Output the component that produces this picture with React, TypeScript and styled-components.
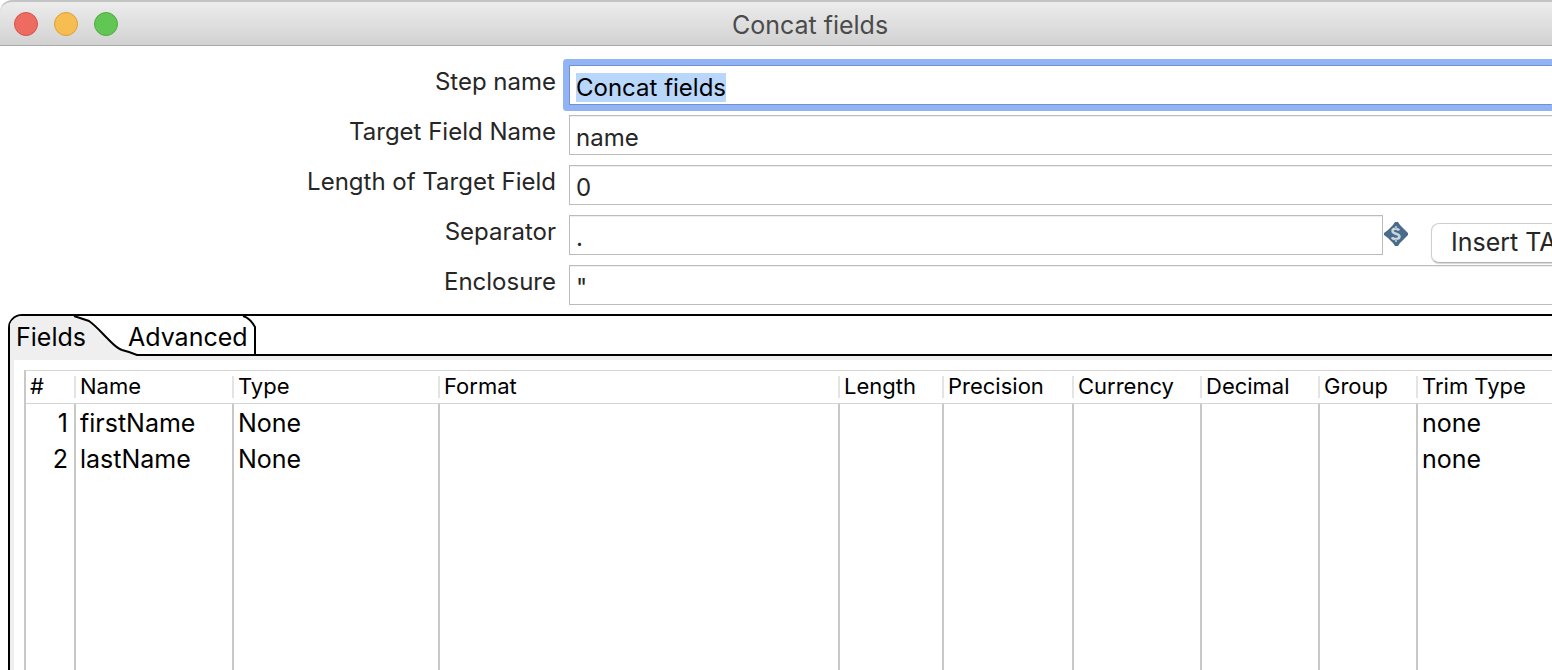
import React, { useEffect, useRef } from "react";
import styled, { createGlobalStyle } from "styled-components";

const GlobalStyle = createGlobalStyle`
  *, *::before, *::after { box-sizing: border-box; }
  body {
    margin: 0;
    background: #fff;
    color: #000;
    font-family: Inter, "Liberation Sans", sans-serif;
  }
  button, input { font: inherit; color: inherit; }
`;

const Window = styled.div`
  display: flex;
  flex-direction: column;
  min-height: 100vh;
  overflow: hidden;
`;

const TitleBar = styled.header`
  display: flex;
  align-items: center;
  height: 46px;
  padding-left: 14px;
  border-top: 2px solid #c4c4c4;
  border-bottom: 1px solid #a9a9a9;
  border-top-left-radius: 12px;
  background: linear-gradient(#ececec, #d2d2d2);
`;

const Lights = styled.div`
  display: flex;
  gap: 16px;
`;

const Light = styled.button<{ $fill: string; $edge: string }>`
  width: 24px;
  height: 24px;
  padding: 0;
  border: 1px solid ${(p) => p.$edge};
  border-radius: 50%;
  background: ${(p) => p.$fill};
`;

const Title = styled.h1`
  flex: 1;
  margin: 0;
  padding: 2px 50px 0 0;
  color: #4b4b4b;
  font-size: 25px;
  font-weight: 400;
  line-height: 32px;
  text-align: center;
`;

const Form = styled.form`
  display: flex;
  flex-direction: column;
  gap: 10px;
  padding: 19px 0 9px;
`;

const FormRow = styled.div`
  display: flex;
  align-items: flex-start;
  height: 40px;
`;

const Label = styled.label`
  flex: none;
  width: 569px;
  padding-right: 13px;
  color: #262626;
  font-size: 24px;
  line-height: 34px;
  text-align: right;
`;

const TextInput = styled.input<{ $closed?: boolean }>`
  flex: 1;
  min-width: 0;
  height: 40px;
  padding: 4px 6px 0;
  border: 1px solid #bcbcbc;
  border-right-width: ${(p) => (p.$closed ? "1px" : "0")};
  border-radius: 0;
  background: #fff;
  box-shadow: inset 0 1px #efefef;
  color: #262626;
  font-size: 24px;
  line-height: 32px;
  outline: none;

  &:focus {
    border-color: #7090d2;
    box-shadow: 0 0 0 6px #92b4f5;
    border-radius: 1px;
    color: #000;
  }
  &::selection {
    background: #b8d7fb;
    color: #000;
  }
`;

const VariableIcon = styled.svg`
  flex: none;
  width: 24px;
  height: 24px;
  margin: 7px 23px 0 1px;
`;

const PushButton = styled.button`
  flex: none;
  width: 160px;
  height: 40px;
  margin: 8px -39px 0 0;
  padding: 0 19px 2px;
  border: 1px solid #cfcfcf;
  border-bottom-color: #b4b4b4;
  border-radius: 8px;
  background: #fff;
  box-shadow: 0 1px 1px #d8d8d8;
  color: #262626;
  font-size: 25px;
  line-height: 32px;
  text-align: left;
  white-space: nowrap;
`;

const TabFolder = styled.section`
  display: flex;
  flex: 1;
  flex-direction: column;
  margin-left: 8px;
  border: solid #000;
  border-width: 2px 0 0 2px;
  border-top-left-radius: 14px;
`;

const TabStrip = styled.div`
  display: flex;
  height: 40px;
`;

const TabList = styled.div`
  position: relative;
  display: flex;
  flex: none;
  width: 246px;
`;

const TabShape = styled.svg`
  position: absolute;
  inset: 0;
`;

const Tab = styled.button<{ $width: number }>`
  position: relative;
  width: ${(p) => p.$width}px;
  padding: 2px 0 0 6px;
  border: 0;
  background: none;
  font-size: 25px;
  line-height: 32px;
  text-align: left;
  white-space: nowrap;
`;

const StripRest = styled.div`
  flex: 1;
  border-bottom: 2px solid #000;
`;

const Panel = styled.div`
  display: flex;
  flex: 1;
  border: solid #efefef;
  border-width: 4px 0 0 4px;
  padding: 10px 0 0 10px;
`;

const Grid = styled.table`
  flex: 1;
  table-layout: fixed;
  width: 100%;
  border-spacing: 0;
  border-top: 1px solid #d4d4d4;
  border-left: 2px solid #c8c8c8;
`;

const Column = styled.col<{ $width?: number }>`
  width: ${(p) => (p.$width ? `${p.$width}px` : "auto")};
`;

const HeadCell = styled.th`
  height: 33px;
  padding: 0;
  border-bottom: 1px solid #d4d4d4;
  font-size: 22px;
  font-weight: 400;
  line-height: 20px;
  text-align: left;
  white-space: nowrap;
`;

const HeadText = styled.div<{ $divided: boolean }>`
  padding: 0 0 2px 4px;
  border-left: ${(p) => (p.$divided ? "2px solid #e4e4e4" : "0")};
`;

const Cell = styled.td`
  height: 36px;
  padding: 2px 0 0 4px;
  border-left: 2px solid #c8c8c8;
  font-size: 25px;
  line-height: 32px;
  white-space: nowrap;

  &:first-child {
    padding: 2px 6px 0 0;
    border-left: 0;
    text-align: right;
  }
`;

const FillRow = styled.tr`
  height: 100%;
`;

const columns: { name: string; width?: number }[] = [
  { name: "#", width: 48 },
  { name: "Name", width: 158 },
  { name: "Type", width: 206 },
  { name: "Format", width: 400 },
  { name: "Length", width: 104 },
  { name: "Precision", width: 130 },
  { name: "Currency", width: 128 },
  { name: "Decimal", width: 118 },
  { name: "Group", width: 98 },
  { name: "Trim Type" },
];

const rows = [
  ["1", "firstName", "None", "", "", "", "", "", "", "none"],
  ["2", "lastName", "None", "", "", "", "", "", "", "none"],
];

export default function App() {
  const stepName = useRef<HTMLInputElement>(null);

  useEffect(() => {
    stepName.current?.focus();
    stepName.current?.select();
  }, []);

  return (
    <Window>
      <GlobalStyle />
      <TitleBar>
        <Lights>
          <Light aria-label="Close" $fill="#ed6b60" $edge="#d9534b" />
          <Light aria-label="Minimize" $fill="#f6be50" $edge="#dda03c" />
          <Light aria-label="Zoom" $fill="#62c655" $edge="#4fab42" />
        </Lights>
        <Title>Concat fields</Title>
      </TitleBar>

      <Form onSubmit={(e) => e.preventDefault()}>
        <FormRow>
          <Label htmlFor="step">Step name</Label>
          <TextInput id="step" ref={stepName} defaultValue="Concat fields" />
        </FormRow>
        <FormRow>
          <Label htmlFor="target">Target Field Name</Label>
          <TextInput id="target" defaultValue="name" />
        </FormRow>
        <FormRow>
          <Label htmlFor="length">Length of Target Field</Label>
          <TextInput id="length" defaultValue="0" />
        </FormRow>
        <FormRow>
          <Label htmlFor="separator">Separator</Label>
          <TextInput id="separator" defaultValue="." $closed />
          <VariableIcon viewBox="0 0 24 24" aria-hidden="true">
            <path
              d="M11 0h3l2 3 5 5 3 3v2l-3 3-5 5-2 3h-3l-2-3-5-5-4-3v-2l4-3 5-5z"
              fill="#4a6b89"
            />
            <path
              d="M15 8.500C14 6 8.500 6 8.500 9c0 3.200 7 2.400 7 5.600 0 3.200-6.500 3-7.500.6"
              fill="none"
              stroke="#c9d5df"
              strokeWidth="2.500"
            />
            <path d="M12 4v3M12 17v3" stroke="#a9bac9" strokeWidth="2" />
          </VariableIcon>
          <PushButton type="button">Insert TAB</PushButton>
        </FormRow>
        <FormRow>
          <Label htmlFor="enclosure">Enclosure</Label>
          <TextInput id="enclosure" defaultValue={'"'} />
        </FormRow>
      </Form>

      <TabFolder>
        <TabStrip>
          <TabList role="tablist">
            <TabShape width="246" height="40" viewBox="0 0 246 40" aria-hidden="true">
              <path
                d="M0 40V8Q4 0 12 0H64L73 3L79 5C86 10 91 16 97 22C102 27 106 32 112 34L119 36L127 39V40Z"
                fill="#efefef"
              />
              <path
                d="M64 0L73 3L79 5C86 10 91 16 97 22C102 27 106 32 112 34L119 36L127 39H246M233 0Q240 2 245 11V40"
                fill="none"
                stroke="#000"
                strokeWidth="2"
              />
            </TabShape>
            <Tab role="tab" aria-selected="true" $width={112}>Fields</Tab>
            <Tab role="tab" aria-selected="false" $width={134}>Advanced</Tab>
          </TabList>
          <StripRest />
        </TabStrip>
        <Panel role="tabpanel">
          <Grid>
            <colgroup>
              {columns.map((c) => (
                <Column key={c.name} $width={c.width} />
              ))}
            </colgroup>
            <thead>
              <tr>
                {columns.map((c, i) => (
                  <HeadCell key={c.name} scope="col">
                    <HeadText $divided={i > 0}>{c.name}</HeadText>
                  </HeadCell>
                ))}
              </tr>
            </thead>
            <tbody>
              {rows.map((row) => (
                <tr key={row[0]}>
                  {row.map((value, i) => (
                    <Cell key={columns[i].name}>{value}</Cell>
                  ))}
                </tr>
              ))}
              <FillRow aria-hidden="true">
                {columns.map((c) => (
                  <Cell key={c.name} />
                ))}
              </FillRow>
            </tbody>
          </Grid>
        </Panel>
      </TabFolder>
    </Window>
  );
}
